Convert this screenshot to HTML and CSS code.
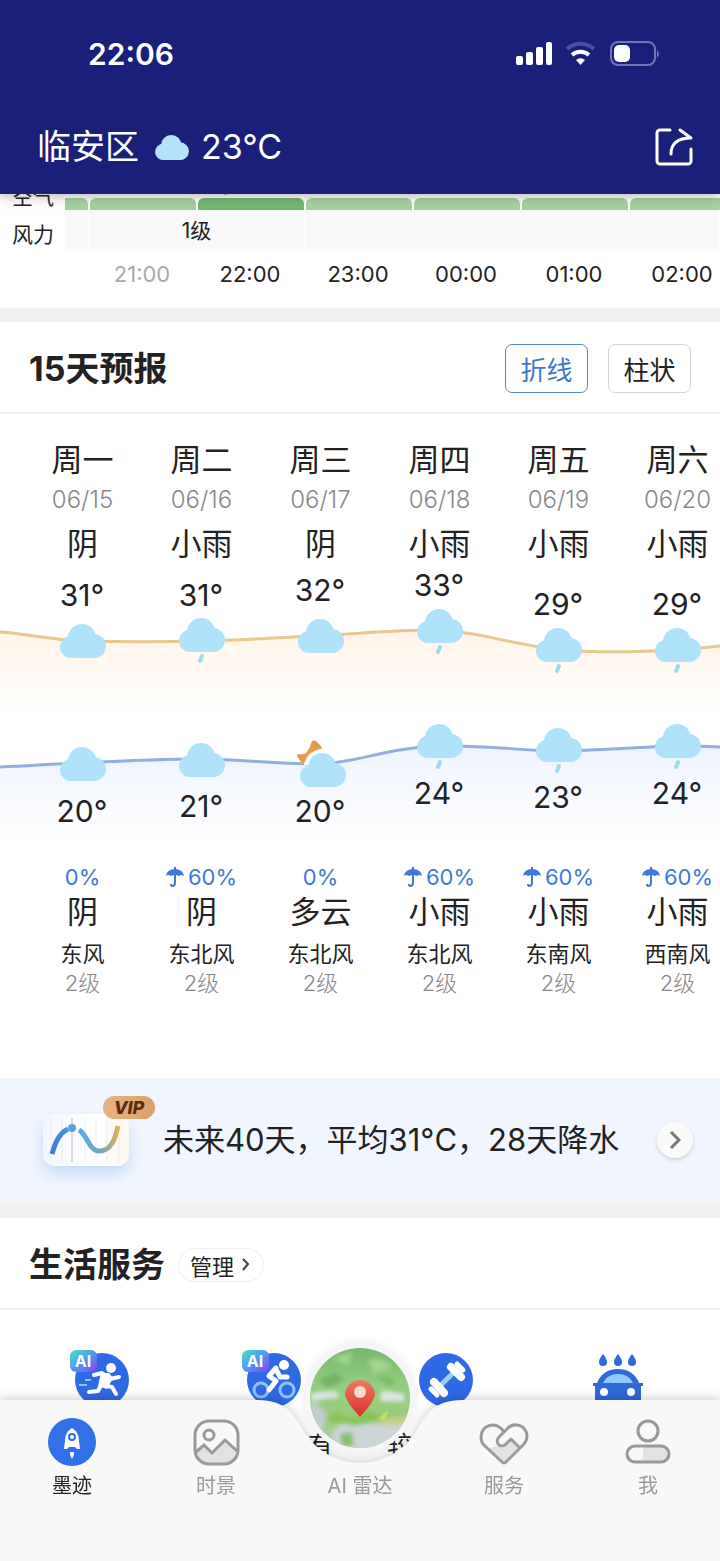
FILE: index.html
```html
<!DOCTYPE html>
<html lang="zh-CN">
<head>
    <meta charset="UTF-8">
    <meta name="viewport" content="width=device-width, initial-scale=1.0">
    <title>临安区天气</title>
    <link rel="stylesheet" href="styles.css">
</head>
<body>
    <header class="header">
        <div class="status">
            <span class="clock">22:06</span>
            <svg class="status-icons" width="146" height="28" viewBox="0 0 146 28">
                <g fill="#fff">
                    <rect x="2" y="16" width="7" height="9" rx="2"/>
                    <rect x="12" y="12" width="7" height="13" rx="2"/>
                    <rect x="22" y="7" width="7" height="18" rx="2"/>
                    <rect x="32" y="2" width="6" height="23" rx="2"/>
                </g>
                <path d="M53 9a20 20 0 0 1 27 0" fill="none" stroke="#4a4fa6" stroke-width="4"/>
                <path d="M58 15a13 13 0 0 1 17 0" fill="none" stroke="#fff" stroke-width="4"/>
                <path d="M62 20a7 7 0 0 1 9 0l-4.500 5z" fill="#fff"/>
                <rect x="97" y="2" width="44" height="23" rx="7" fill="none" stroke="#7075ba" stroke-width="2"/>
                <rect x="100" y="5" width="16" height="17" rx="5" fill="#fff"/>
                <path d="M143 10q4 4 0 8z" fill="#7075ba"/>
            </svg>
        </div>
        <div class="place">
            <h1 class="city">临安区</h1>
            <svg width="34" height="25" viewBox="0 0 46 34" fill="#b5e3fb"><use href="#cloud"/></svg>
            <span class="now">23°C</span>
            <button class="share" aria-label="分享">
                <svg width="38" height="38" viewBox="0 0 38 38" fill="none" stroke="#fff" stroke-width="3" stroke-linecap="round" stroke-linejoin="round">
                    <path d="M15 2H5a3 3 0 0 0-3 3v28a3 3 0 0 0 3 3h28a3 3 0 0 0 3-3V21"/>
                    <path d="M16 26c0-10 6-16 20-16L25 2"/>
                </svg>
            </button>
        </div>
    </header>

    <main>
        <!-- 逐小时 -->
        <section class="hourly">
            <div class="row air">
                <span class="row-label">空气</span>
                <div class="track">
                    <div class="bar first"></div>
                    <div class="bar"></div>
                    <div class="bar good"><span>优</span></div>
                    <div class="bar"></div>
                    <div class="bar"></div>
                    <div class="bar"></div>
                    <div class="bar"></div>
                </div>
            </div>
            <div class="row wind">
                <span class="row-label">风力</span>
                <div class="track">
                    <div class="cell first"></div>
                    <div class="cell wide">1级</div>
                    <div class="cell rest"></div>
                </div>
            </div>
            <div class="row hours">
                <span class="row-label"></span>
                <div class="track">
                    <span class="hour first"></span>
                    <span class="hour past">21:00</span>
                    <span class="hour">22:00</span>
                    <span class="hour">23:00</span>
                    <span class="hour">00:00</span>
                    <span class="hour">01:00</span>
                    <span class="hour">02:00</span>
                </div>
            </div>
        </section>

        <!-- 15天预报 -->
        <section class="forecast">
            <div class="section-head">
                <h2>15天预报</h2>
                <div class="modes">
                    <button class="mode active">折线</button>
                    <button class="mode">柱状</button>
                </div>
            </div>
            <div class="strip">
                <div class="days">
                    <div class="day"><p class="big">周一</p><p class="date">06/15</p><p class="big">阴</p></div>
                    <div class="day"><p class="big">周二</p><p class="date">06/16</p><p class="big">小雨</p></div>
                    <div class="day"><p class="big">周三</p><p class="date">06/17</p><p class="big">阴</p></div>
                    <div class="day"><p class="big">周四</p><p class="date">06/18</p><p class="big">小雨</p></div>
                    <div class="day"><p class="big">周五</p><p class="date">06/19</p><p class="big">小雨</p></div>
                    <div class="day"><p class="big">周六</p><p class="date">06/20</p><p class="big">小雨</p></div>
                </div>

                <svg class="chart" width="738" height="294" viewBox="0 0 738 294">
                    <defs>
                        <linearGradient id="warm" x1="0" y1="0" x2="0" y2="1">
                            <stop offset="0" stop-color="#fff4e8"/>
                            <stop offset="1" stop-color="#fff"/>
                        </linearGradient>
                        <linearGradient id="cool" x1="0" y1="0" x2="0" y2="1">
                            <stop offset="0" stop-color="#eef3fe"/>
                            <stop offset="1" stop-color="#fff"/>
                        </linearGradient>
                        <symbol id="cloud" viewBox="0 0 46 34">
                            <circle cx="22" cy="14" r="14"/>
                            <circle cx="11" cy="23" r="11"/>
                            <circle cx="34" cy="22" r="12"/>
                            <path d="M10 14L18 4h10l8 8v22H10z"/>
                        </symbol>
                        <symbol id="rain" viewBox="0 0 46 46">
                            <circle cx="22" cy="14" r="14"/>
                            <circle cx="11" cy="23" r="11"/>
                            <circle cx="34" cy="22" r="12"/>
                            <path d="M10 14L18 4h10l8 8v22H10z"/>
                            <path d="M23 38l-2 5" stroke="#9bdcec" stroke-width="4" stroke-linecap="round"/>
                        </symbol>
                        <symbol id="umbrella" viewBox="0 0 18 20">
                            <path d="M0 9a9 7 0 0 1 18 0q-3-2-5 0q-4-2-8 0q-3-2-5 0z"/>
                            <path d="M9 0v16q0 3-3 3q-1 0-1-2" fill="none" stroke="#3f78dc" stroke-width="2"/>
                        </symbol>
                    </defs>
                    <path fill="url(#warm)" d="M0 62C30 64 50 70 82 71C130 72 160 72 201 71C250 70 280 67 321 66C370 62 400 60 440 60C480 62 510 74 559 80C600 83 640 82 678 80C700 78 720 76 738 74V138H0Z"/>
                    <path fill="none" stroke="#e9c78f" stroke-width="3" d="M0 62C30 64 50 70 82 71C130 72 160 72 201 71C250 70 280 67 321 66C370 62 400 60 440 60C480 62 510 74 559 80C600 83 640 82 678 80C700 78 720 76 738 74"/>
                    <path fill="url(#cool)" d="M0 197C30 196 50 194 82 193C120 191 160 189 201 189C250 190 280 194 321 194C360 192 390 177 440 176C490 175 520 181 559 181C600 180 640 177 678 176C700 176 720 177 738 178V270H0Z"/>
                    <path fill="none" stroke="#92aedf" stroke-width="3" d="M0 197C30 196 50 194 82 193C120 191 160 189 201 189C250 190 280 194 321 194C360 192 390 177 440 176C490 175 520 181 559 181C600 180 640 177 678 176C700 176 720 177 738 178"/>

                    <g fill="#aee3fb">
                        <use href="#cloud" x="60" y="54" width="46" height="34"/>
                        <use href="#rain" x="179" y="48" width="46" height="46"/>
                        <use href="#cloud" x="298" y="49" width="46" height="34"/>
                        <use href="#rain" x="417" y="39" width="46" height="46"/>
                        <use href="#rain" x="536" y="58" width="46" height="46"/>
                        <use href="#rain" x="655" y="58" width="46" height="46"/>
                        <use href="#cloud" x="60" y="177" width="46" height="34"/>
                        <use href="#cloud" x="179" y="173" width="46" height="34"/>
                        <use href="#rain" x="417" y="154" width="46" height="46"/>
                        <use href="#rain" x="536" y="158" width="46" height="46"/>
                        <use href="#rain" x="655" y="154" width="46" height="46"/>
                    </g>
                    <!-- 夜间多云 -->
                    <path fill="#e69a4c" d="M312 171q2-1 4 0q5 4 7 9q-9 1-13 5q-2 4-6 8q-2 1-3-1l-4-6q0-2 2-2q5 1 8-2q3-4 5-11z"/>
                    <path fill="#fff" d="M304 195c2-10 9-15 17-16c6-1 12 2 16 7l-8 9z"/>
                    <use href="#cloud" x="300" y="183" width="46" height="34" fill="#aee3fb"/>

                    <g class="temp">
                        <text x="82" y="36">31°</text>
                        <text x="201" y="36">31°</text>
                        <text x="320" y="31">32°</text>
                        <text x="439" y="26">33°</text>
                        <text x="558" y="45">29°</text>
                        <text x="677" y="45">29°</text>
                        <text x="82" y="252">20°</text>
                        <text x="201" y="247">21°</text>
                        <text x="320" y="252">20°</text>
                        <text x="439" y="234">24°</text>
                        <text x="558" y="238">23°</text>
                        <text x="677" y="234">24°</text>
                    </g>
                </svg>

                <div class="days">
                    <div class="day"><p class="chance">0%</p><p class="big">阴</p><p class="dir">东风</p><p class="level">2级</p></div>
                    <div class="day"><p class="chance"><svg width="18" height="20" fill="#3f78dc"><use href="#umbrella"/></svg>60%</p><p class="big">阴</p><p class="dir">东北风</p><p class="level">2级</p></div>
                    <div class="day"><p class="chance">0%</p><p class="big">多云</p><p class="dir">东北风</p><p class="level">2级</p></div>
                    <div class="day"><p class="chance"><svg width="18" height="20" fill="#3f78dc"><use href="#umbrella"/></svg>60%</p><p class="big">小雨</p><p class="dir">东北风</p><p class="level">2级</p></div>
                    <div class="day"><p class="chance"><svg width="18" height="20" fill="#3f78dc"><use href="#umbrella"/></svg>60%</p><p class="big">小雨</p><p class="dir">东南风</p><p class="level">2级</p></div>
                    <div class="day"><p class="chance"><svg width="18" height="20" fill="#3f78dc"><use href="#umbrella"/></svg>60%</p><p class="big">小雨</p><p class="dir">西南风</p><p class="level">2级</p></div>
                </div>
            </div>

            <a class="vip" href="#">
                <span class="vip-card">
                    <svg width="86" height="52" viewBox="0 0 86 52" fill="none">
                        <defs>
                            <linearGradient id="wave" gradientUnits="userSpaceOnUse" x1="8" y1="0" x2="78" y2="0">
                                <stop offset="0" stop-color="#3f78dc"/>
                                <stop offset=".45" stop-color="#5fa8e6"/>
                                <stop offset=".75" stop-color="#7da9b4"/>
                                <stop offset="1" stop-color="#eab54a"/>
                            </linearGradient>
                        </defs>
                        <path d="M8 4v44M19 4v44M42 4v44M53 4v44M64 4v44M76 20v28" stroke="#e6edf4"/>
                        <path d="M29 4v44" stroke="#b9b6c4"/>
                        <path d="M9 40C13 26 17 19 25 15M36 16C44 20 46 37 56 37C68 37 72 26 75 12" stroke="url(#wave)" stroke-width="5"/>
                        <circle cx="29" cy="14" r="4" fill="#5b9fe0"/>
                    </svg>
                    <b class="vip-badge">VIP</b>
                </span>
                <span class="vip-text">未来40天，平均31°C，28天降水</span>
                <span class="go">
                    <svg width="12" height="18" viewBox="0 0 12 18" fill="none" stroke="#777" stroke-width="3"><path d="M2 1l8 8l-8 8"/></svg>
                </span>
            </a>
        </section>

        <!-- 生活服务 -->
        <section class="life">
            <div class="section-head">
                <h2>生活服务</h2>
                <button class="manage">管理
                    <svg width="8" height="13" viewBox="0 0 8 13" fill="none" stroke="#444" stroke-width="2"><path d="M1 1l5 5l-5 6"/></svg>
                </button>
            </div>
            <div class="services">
                <div class="service">
                    <svg width="64" height="64" viewBox="0 0 64 64">
                        <defs>
                            <linearGradient id="ai" x1="0" y1="0" x2="1" y2="1">
                                <stop offset="0" stop-color="#4fe0c4"/>
                                <stop offset=".5" stop-color="#4c9bf0"/>
                                <stop offset="1" stop-color="#8a3df0"/>
                            </linearGradient>
                        </defs>
                        <circle cx="32" cy="33" r="27" fill="#2f6ae6"/>
                        <rect x="0" y="3" width="27" height="22" rx="6" fill="url(#ai)"/>
                        <text class="ai" x="13" y="20">AI</text>
                        <circle cx="41" cy="21" r="5" fill="#fff"/>
                        <g fill="none" stroke="#fff" stroke-width="4" stroke-linecap="round" stroke-linejoin="round">
                            <path d="M24 28l8-2l8 6l9-2"/>
                            <path d="M31 38l11 2l4 7"/>
                            <path d="M31 38l-3 6l-9 1"/>
                        </g>
                        <path d="M31 26l-3 13l9 3l6-11l-4-5z" fill="#fff"/>
                        <path d="M15 33h6M9 38h8" stroke="#8cc4fb" stroke-width="2"/>
                    </svg>
                </div>
                <div class="service">
                    <svg width="64" height="64" viewBox="0 0 64 64">
                        <circle cx="32" cy="33" r="27" fill="#2f6ae6"/>
                        <rect x="0" y="3" width="27" height="22" rx="6" fill="url(#ai)"/>
                        <text class="ai" x="13" y="20">AI</text>
                        <circle cx="19" cy="43" r="7" fill="none" stroke="#8cc4fb" stroke-width="3"/>
                        <circle cx="45" cy="43" r="7" fill="none" stroke="#8cc4fb" stroke-width="3"/>
                        <circle cx="42" cy="18" r="5" fill="#fff"/>
                        <path d="M34 21l-7 8l7 5l-7 9M34 22l4 8h7" fill="none" stroke="#fff" stroke-width="5" stroke-linecap="round" stroke-linejoin="round"/>
                    </svg>
                    <span class="service-label end">有</span>
                </div>
                <div class="service">
                    <svg width="64" height="64" viewBox="0 0 64 64">
                        <circle cx="32" cy="33" r="27" fill="#2f6ae6"/>
                        <g stroke-linecap="round">
                            <path d="M24 41l16-16" stroke="#9bd0fb" stroke-width="5"/>
                            <path d="M20 35l10 11M37 20l10 10" stroke="#fff" stroke-width="8"/>
                            <path d="M17 42l6 6M43 17l6 6" stroke="#fff" stroke-width="5"/>
                        </g>
                    </svg>
                    <span class="service-label">较</span>
                </div>
                <div class="service">
                    <svg width="64" height="64" viewBox="0 0 64 64">
                        <g fill="#2f6ad8">
                            <path id="drop" d="M17 7q4 5 4 8a4 4 0 0 1-8 0q0-3 4-8z"/>
                            <use href="#drop" x="15"/>
                            <use href="#drop" x="29"/>
                            <path d="M7 36h4c3-8 10-14 21-14s18 6 21 14h4v3h-2v21H9V39H7z"/>
                        </g>
                        <path d="M17 36c3-6 8-9 15-9s12 3 15 9z" fill="#8dccfa"/>
                        <circle cx="18" cy="45" r="4" fill="#fff"/>
                        <circle cx="45" cy="45" r="4" fill="#fff"/>
                    </svg>
                </div>
            </div>
        </section>
    </main>

    <nav class="tabbar">
        <svg class="tabbar-bg" viewBox="0 0 720 161" preserveAspectRatio="none">
            <path fill="#f8f8f8" d="M0 0H258C285 0 294 14 303 30A66 66 0 0 0 417 30C426 14 435 0 462 0H720V161H0Z"/>
        </svg>
        <a class="tab current" href="#">
            <svg width="50" height="48" viewBox="0 0 50 48">
                <circle cx="25" cy="24" r="24" fill="#3071ea"/>
                <path d="M25 10c5 3 7 8 7 13l1 8h-3l-2-2h-6l-2 2h-3l1-8c0-5 2-10 7-13z" fill="#fff"/>
                <circle cx="25" cy="19" r="3" fill="#fff" stroke="#3071ea" stroke-width="2"/>
                <path d="M23 34h4v3l-2 4l-2-4z" fill="#fff"/>
            </svg>
            墨迹
        </a>
        <a class="tab" href="#">
            <svg width="50" height="48" viewBox="0 0 50 48" fill="none" stroke="#999" stroke-width="3">
                <path d="M5 34l8-7l8 8l13-13l11 11c-1 9-5 13-13 13H18C9 46 5 42 5 34z" fill="#e2e2e2" stroke="none"/>
                <rect x="4" y="3" width="43" height="43" rx="14"/>
                <circle cx="18" cy="17" r="5"/>
                <path d="M5 34l8-7l8 8l13-13l12 11"/>
            </svg>
            时景
        </a>
        <a class="tab radar" href="#">
            <svg class="orb" width="124" height="124" viewBox="0 0 124 124">
                <defs>
                    <clipPath id="globe"><circle cx="62" cy="62" r="50"/></clipPath>
                    <linearGradient id="land" x1="0" y1="0" x2="0" y2="1">
                        <stop offset="0" stop-color="#6fae68"/>
                        <stop offset=".4" stop-color="#93cf7e"/>
                        <stop offset=".7" stop-color="#9ccb7e"/>
                        <stop offset="1" stop-color="#c3cfd0"/>
                    </linearGradient>
                    <linearGradient id="pin" x1="0" y1="0" x2="0" y2="1">
                        <stop offset="0" stop-color="#ee7a62"/>
                        <stop offset="1" stop-color="#d8302c"/>
                    </linearGradient>
                    <filter id="soft"><feGaussianBlur stdDeviation="2"/></filter>
                </defs>
                <circle cx="62" cy="62" r="55" fill="#f6f6f6"/>
                <g clip-path="url(#globe)">
                    <rect width="124" height="124" fill="url(#land)"/>
                    <g filter="url(#soft)">
                        <path d="M12 58q14-4 28-2v6q-14 0-26 4zM84 54l22 4v8q-14-2-24 0z" fill="#dde6e4"/>
                        <path d="M12 66q14 2 16 16l-4 14q-12-8-12-30z" fill="#c2cdd2"/>
                        <path d="M34 96q14-16 34-8l42-2l-12 30H36z" fill="#ccd5d8"/>
                        <path d="M34 22l20-6l-4 14zM70 24q16-4 24 8l-18 6z" fill="#a4d490"/>
                        <path d="M20 44l18-8l8 8l-16 8zM78 40l20 4l-6 6z" fill="#74b268"/>
                        <path d="M28 84q8-12 18-4l14 2l10-8l14 8l-26 8z" fill="#86c552"/>
                        <path d="M82 84l28-4v8l-26 2z" fill="#c9cf8c"/>
                        <path d="M42 98l12-2l2 14l-12 2z" fill="#86c06c"/>
                    </g>
                    <path d="M82 84q2-8 8-8q-1 7-8 8z" fill="#c6e25a"/>
                    <path d="M62 81q-13-14-15-22a15 15 0 0 1 30 0q-2 8-15 22z" fill="url(#pin)"/>
                    <circle cx="62" cy="56" r="6" fill="#fbd9cb"/>
                </g>
            </svg>
            AI 雷达
        </a>
        <a class="tab" href="#">
            <svg width="50" height="48" viewBox="0 0 50 48" fill="none" stroke="#999" stroke-width="3" stroke-linejoin="round">
                <path d="M7 30q8 0 14-4q4 2 10-6l9 9l-15 16z" fill="#e2e2e2" stroke="none"/>
                <path d="M25 14C17 2 2 7 2 19q0 6 4 9l17 16q2 2 4 0l17-17q4-4 4-9C47 6 34 4 28 11l-8 8c-5 6 2 12 7 7l5-5l8 8"/>
            </svg>
            服务
        </a>
        <a class="tab" href="#">
            <svg width="50" height="48" viewBox="0 0 50 48" fill="none" stroke="#999" stroke-width="3">
                <path d="M20 29h19a8 8 0 0 1 0 15H20z" fill="#e2e2e2" stroke="none"/>
                <circle cx="25" cy="13" r="10"/>
                <rect x="4" y="28" width="42" height="16" rx="8"/>
            </svg>
            我
        </a>
    </nav>
</body>
</html>
```
FILE: styles.css
```css
* {
    box-sizing: border-box;
}

body {
    margin: 0;
    background-color: #f1f1f1;
    color: #222;
    font-family: Inter, "Noto Sans CJK SC", sans-serif;
}

h1,
h2,
p {
    margin: 0;
    font-weight: normal;
}

button {
    border: none;
    background: none;
    padding: 0;
    font-family: inherit;
    color: inherit;
    cursor: pointer;
}

a {
    color: inherit;
    text-decoration: none;
}

svg {
    display: block;
    flex: none;
}

.header {
    position: sticky;
    top: 0;
    z-index: 2;
    height: 194px;
    background-color: #1a1f7a;
    color: #fff;
    box-shadow: 0 2px 12px rgba(0, 0, 0, 0.3);
}

.status {
    display: flex;
    align-items: center;
    justify-content: space-between;
    padding: 36px 60px 0 88px;
}

.clock {
    font-size: 30px;
    line-height: 36px;
    font-weight: 600;
}

.place {
    display: flex;
    align-items: center;
    padding: 52px 27px 0 37px;
    font-size: 34px;
    line-height: 46px;
}

.city {
    font-size: 34px;
    line-height: 46px;
    margin-right: 16px;
}

.now {
    margin-left: 12px;
}

.share {
    margin-left: auto;
}

/* 逐小时 */
.hourly {
    margin-top: -20px;
    padding-bottom: 9px;
    background-color: #fff;
    font-size: 21px;
    overflow: hidden;
}

.row {
    display: flex;
}

.row-label {
    flex: none;
    width: 65px;
    padding-left: 12px;
}

.track {
    display: flex;
    flex: 1;
    overflow: hidden;
}

.air {
    height: 36px;
    line-height: 46px;
}

.bar {
    flex: none;
    width: 106px;
    height: 12px;
    margin: 24px 1px 0;
    border-radius: 6px 6px 0 0;
    background-color: #a5d1a1;
}

.bar span {
    position: relative;
    top: -24px;
    left: 23px;
    display: block;
    font-size: 20px;
    line-height: 24px;
}

.bar.good {
    background-color: #73b973;
}

.bar.first {
    width: 23px;
    margin-left: 0;
    border-top-left-radius: 0;
}

.wind {
    height: 39px;
    line-height: 50px;
}

.cell {
    flex: none;
    margin-right: 1px;
    background-color: #f9f9f9;
    text-align: center;
    line-height: 42px;
}

.cell.first {
    width: 23px;
}

.cell.wide {
    width: 215px;
}

.cell.rest {
    flex: 1;
}

.hours {
    height: 50px;
    line-height: 50px;
    font-size: 22px;
}

.hour {
    flex: none;
    width: 108px;
    text-align: center;
}

.hour.first {
    width: 23px;
}

.hour.past {
    color: #aaa;
}

/* 15天预报 */
.forecast {
    margin-top: 14px;
    background-color: #fff;
}

.section-head {
    display: flex;
    align-items: center;
    height: 92px;
    padding: 3px 29px 0;
    border-bottom: 2px solid #f2f2f2;
}

.section-head h2 {
    font-size: 34px;
    line-height: 46px;
    font-weight: 700;
}

.modes {
    display: flex;
    gap: 20px;
    margin-left: auto;
}

.mode {
    width: 83px;
    height: 49px;
    border: 1px solid #d4d4d4;
    border-radius: 7px;
    font-size: 26px;
}

.mode.active {
    border-color: #4f86cc;
    color: #3f78c8;
}

.strip {
    overflow: hidden;
    padding: 27px 0 81px;
}

.days {
    display: grid;
    grid-template-columns: repeat(6, 119px);
    padding-left: 23px;
    text-align: center;
}

.big {
    font-size: 31px;
    line-height: 38px;
}

.date {
    margin: 4px 0 8px;
    font-size: 24px;
    line-height: 34px;
    font-weight: 300;
    color: #888;
}

.chart {
    margin-top: 7px;
    overflow: visible;
}

.temp {
    fill: #222;
    font-size: 30px;
    text-anchor: middle;
}

.chance {
    display: flex;
    justify-content: center;
    align-items: center;
    gap: 4px;
    font-size: 22px;
    line-height: 26px;
    margin-bottom: 3px;
    color: #3f78dc;
}

.dir {
    margin-top: 8px;
    font-size: 22px;
    line-height: 30px;
}

.level {
    font-size: 22px;
    line-height: 28px;
    font-weight: 300;
    color: #888;
}

.vip {
    display: flex;
    align-items: center;
    height: 124px;
    padding: 0 27px 0 43px;
    background-color: #f1f6fe;
}

.vip-card {
    position: relative;
    flex: none;
    width: 86px;
    height: 52px;
    border-radius: 12px;
    background: linear-gradient(90deg, #f2f7fd, #fff 60%, #fdf8ee);
    box-shadow: 0 8px 14px rgba(70, 130, 230, 0.25);
}

.vip-badge {
    position: absolute;
    top: -18px;
    right: -26px;
    width: 52px;
    height: 23px;
    border-radius: 12px;
    background: linear-gradient(90deg, #e6b283, #dfa068);
    color: #5a2c10;
    font-size: 18px;
    line-height: 23px;
    font-style: italic;
    font-weight: 800;
    text-align: center;
}

.vip-text {
    margin-left: 34px;
    font-size: 31px;
    line-height: 40px;
    white-space: nowrap;
}

.go {
    display: flex;
    align-items: center;
    justify-content: center;
    width: 36px;
    height: 36px;
    margin-left: auto;
    border-radius: 50%;
    background-color: #fafafa;
    box-shadow: 0 2px 4px rgba(0, 0, 0, 0.15);
}

/* 生活服务 */
.life {
    margin-top: 16px;
    background-color: #fff;
}

.manage {
    display: flex;
    align-items: center;
    gap: 8px;
    height: 34px;
    margin-left: 13px;
    padding: 0 13px 0 11px;
    border: 1px solid #eee;
    border-radius: 17px;
    font-size: 22px;
}

.services {
    display: grid;
    grid-template-columns: repeat(4, 172px);
    padding: 37px 16px 80px;
    overflow: hidden;
}

.service {
    display: flex;
    flex-direction: column;
    align-items: center;
}

.ai {
    fill: #fff;
    font-size: 16px;
    font-weight: 700;
    text-anchor: middle;
}

.service-label {
    width: 118px;
    margin-top: 16px;
    font-size: 25px;
    line-height: 36px;
}

.service-label.end {
    text-align: right;
}

/* 底部导航 */
.tabbar {
    position: fixed;
    left: 0;
    right: 0;
    bottom: 0;
    display: grid;
    grid-template-columns: repeat(5, 1fr);
    height: 161px;
    padding-top: 18px;
}

.tabbar-bg {
    position: absolute;
    top: 0;
    left: 0;
    width: 100%;
    height: 161px;
    filter: drop-shadow(0 -2px 5px rgba(0, 0, 0, 0.18));
}

.tab {
    position: relative;
    display: flex;
    flex-direction: column;
    align-items: center;
    gap: 7px;
    font-size: 20px;
    line-height: 26px;
    color: #999;
}

.tab.current {
    color: #222;
}

.radar {
    padding-top: 55px;
}

.orb {
    position: absolute;
    top: -82px;
    filter: drop-shadow(0 0 4px rgba(0, 0, 0, 0.1));
}
```
